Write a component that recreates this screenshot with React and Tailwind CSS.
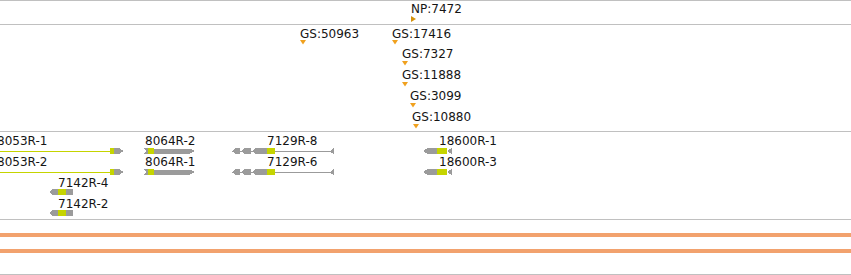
import React from 'react';

const GRAY = '#9b9b9b';
const LIME = '#c5d400';

// Feature labels, global page coordinates (x, top of 14px line box)
const gsLabels = [
  { text: 'GS:50963', x: 300, top: 27, tx: 300, ty: 40 },
  { text: 'GS:17416', x: 392, top: 27, tx: 392, ty: 40 },
  { text: 'GS:7327', x: 402, top: 47, tx: 402, ty: 61 },
  { text: 'GS:11888', x: 402, top: 68, tx: 402, ty: 82 },
  { text: 'GS:3099', x: 410, top: 89, tx: 410, ty: 103 },
  { text: 'GS:10880', x: 412, top: 110, tx: 413, ty: 124 },
];

const geneLabels = [
  { text: '8053R-1', x: -3, top: 134 },
  { text: '8053R-2', x: -3, top: 155 },
  { text: '7142R-4', x: 58, top: 176 },
  { text: '7142R-2', x: 58, top: 197 },
  { text: '8064R-2', x: 145, top: 134 },
  { text: '8064R-1', x: 145, top: 155 },
  { text: '7129R-8', x: 267, top: 134 },
  { text: '7129R-6', x: 267, top: 155 },
  { text: '18600R-1', x: 439, top: 134 },
  { text: '18600R-3', x: 439, top: 155 },
];

function Label({ text, x, top, offset }) {
  return (
    <span
      className="absolute whitespace-nowrap text-[12px] leading-[14px] text-[#151515]"
      style={{ left: x, top: top - offset }}
    >
      {text}
    </span>
  );
}

function pts(list) {
  return list.map((p) => p.join(',')).join(' ');
}

function Gene8053({ c }) {
  return (
    <g>
      <rect x={0} y={c} width={110} height={1} fill={LIME} />
      <rect x={110} y={c - 3} width={4} height={6} fill={LIME} />
      <polygon points={pts([[114, c - 3], [119, c - 3], [124, c], [119, c + 3], [114, c + 3]])} fill={GRAY} />
    </g>
  );
}

function Gene8064({ c }) {
  return (
    <g>
      <polygon points={pts([[143, c - 3], [148, c - 3], [148, c + 3], [143, c + 3], [146, c]])} fill={GRAY} />
      <rect x={148} y={c - 3} width={6} height={6} fill={LIME} />
      <polygon points={pts([[154, c - 2.5], [190, c - 2.5], [195, c], [190, c + 2.5], [154, c + 2.5]])} fill={GRAY} />
    </g>
  );
}

function Gene7129({ c }) {
  const arrow = (t, e) => (
    <polygon points={pts([[t, c], [t + 4, c - 3], [e, c - 3], [e, c + 3], [t + 4, c + 3]])} fill={GRAY} />
  );
  return (
    <g>
      <rect x={232} y={c - 0.5} width={35} height={1.5} fill={GRAY} />
      {arrow(232, 240)}
      {arrow(241, 251)}
      {arrow(252, 267)}
      <rect x={267} y={c - 3} width={8} height={6} fill={LIME} />
      <rect x={275} y={c} width={57} height={1} fill={GRAY} />
      <polygon points={pts([[330, c + 0.5], [334, c - 3], [334, c + 3.5]])} fill={GRAY} />
    </g>
  );
}

function Gene18600({ c }) {
  return (
    <g>
      <polygon points={pts([[423, c], [428, c - 3], [437, c - 3], [437, c + 3], [428, c + 3]])} fill={GRAY} />
      <rect x={437} y={c - 3} width={10} height={6} fill={LIME} />
      <polygon points={pts([[447, c], [452, c - 3], [452, c + 3]])} fill={GRAY} />
    </g>
  );
}

function Gene7142({ c }) {
  return (
    <g>
      <polygon points={pts([[49, c], [53, c - 3], [58, c - 3], [58, c + 3], [53, c + 3]])} fill={GRAY} />
      <rect x={58} y={c - 3} width={8} height={6} fill={LIME} />
      <rect x={66} y={c - 3} width={7} height={6} fill={GRAY} />
    </g>
  );
}

export default function App() {
  return (
    <div
      className="w-[851px] h-[275px] overflow-hidden bg-white flex flex-col"
      style={{ fontFamily: '"DejaVu Sans", Verdana, sans-serif' }}
    >
      {/* NP track */}
      <div className="relative h-[24px] shrink-0 border-t border-[#c0c0c0]">
        <Label text="NP:7472" x={411} top={2} offset={1} />
        <svg className="absolute inset-0" width="851" height="23" viewBox="0 1 851 23">
          <polygon points="411,16 411,22 416,19" fill="#d4920c" />
        </svg>
      </div>

      {/* GS track */}
      <div className="relative h-[107px] shrink-0 border-t border-[#c0c0c0]">
        <svg className="absolute inset-0" width="851" height="106" viewBox="0 25 851 106">
          {gsLabels.map((l) => (
            <polygon
              key={l.text}
              points={pts([[l.tx, l.ty], [l.tx + 6, l.ty], [l.tx + 3, l.ty + 4.5]])}
              fill="#f0a11e"
            />
          ))}
        </svg>
        {gsLabels.map((l) => (
          <Label key={l.text} text={l.text} x={l.x} top={l.top} offset={25} />
        ))}
      </div>

      {/* gene models track */}
      <div className="relative h-[88px] shrink-0 border-t border-[#c0c0c0]">
        <svg className="absolute inset-0" width="851" height="87" viewBox="0 132 851 87" shapeRendering="crispEdges">
          <Gene8053 c={151} />
          <Gene8053 c={172} />
          <Gene7142 c={192} />
          <Gene7142 c={213} />
          <Gene8064 c={151} />
          <Gene8064 c={172} />
          <Gene7129 c={151} />
          <Gene7129 c={172} />
          <Gene18600 c={151} />
          <Gene18600 c={172} />
        </svg>
        {geneLabels.map((l) => (
          <Label key={l.text} text={l.text} x={l.x} top={l.top} offset={132} />
        ))}
      </div>

      {/* coverage track */}
      <div className="h-[55px] shrink-0 border-t border-[#c0c0c0] flex flex-col">
        <div className="mt-[13px] h-[4px] bg-[#f2a26e]" />
        <div className="mt-[12px] h-[4px] bg-[#f2a26e]" />
      </div>
      <div className="h-px shrink-0 bg-[#c0c0c0]" />
    </div>
  );
}
